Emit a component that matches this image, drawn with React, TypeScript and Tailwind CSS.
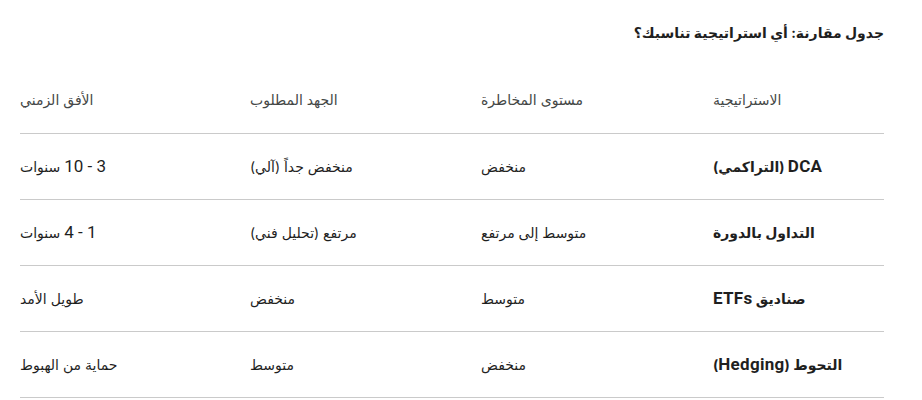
import React from "react";

const headers = ["الاستراتيجية", "مستوى المخاطرة", "الجهد المطلوب", "الأفق الزمني"];

const rows: string[][] = [
  ["DCA (التراكمي)", "منخفض", "منخفض جداً (آلي)", "3 - 10 سنوات"],
  ["التداول بالدورة", "متوسط إلى مرتفع", "مرتفع (تحليل فني)", "1 - 4 سنوات"],
  ["صناديق ETFs", "متوسط", "منخفض", "طويل الأمد"],
  ["التحوط (Hedging)", "منخفض", "متوسط", "حماية من الهبوط"],
];

const cols = "grid grid-cols-[171px_232px_231px_230px]";

// latin words and digits are drawn a bit bigger, like the source page
function Mixed({ text }: { text: string }) {
  const parts = text.split(/([A-Za-z0-9][A-Za-z0-9 \-]*[A-Za-z0-9]|[A-Za-z0-9])/);
  return (
    <>
      {parts.map((p, i) =>
        /[A-Za-z0-9]/.test(p) ? (
          <span key={i} className="text-[17px] tracking-[0.3px]" style={{ fontFamily: "Roboto, Inter, sans-serif" }}>
            {p}
          </span>
        ) : (
          <span key={i}>{p}</span>
        )
      )}
    </>
  );
}

export default function App() {
  return (
    <div
      dir="rtl"
      className="w-[922px] h-[400px] bg-white pl-[20px] pr-[38px] text-[#1f1f1f] overflow-hidden"
      style={{ fontFamily: "Inter, 'DejaVu Sans', sans-serif" }}
    >
      <h2 className="pt-[22px] text-[14px] leading-[22px] font-bold">جدول مقارنة: أي استراتيجية تناسبك؟</h2>

      {/* header */}
      <div className={`${cols} mt-[22px] h-[68px] items-center border-b border-[#cacaca] text-[14px] text-[#444746]`}>
        {headers.map((h, i) => (
          <div key={i} className="text-left">
            {h}
          </div>
        ))}
      </div>

      {rows.map((r, ri) => (
        <div key={ri} className={`${cols} h-[66px] items-center border-b border-[#cacaca] text-[14px]`}>
          {r.map((c, ci) => (
            <div key={ci} className={`text-left ${ci === 0 ? "font-bold" : ""}`}>
              <Mixed text={c} />
            </div>
          ))}
        </div>
      ))}
    </div>
  );
}
